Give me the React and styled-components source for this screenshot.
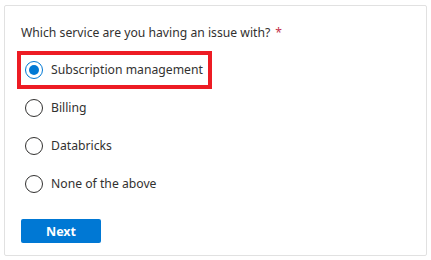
import React, { useState } from "react";
import styled, { createGlobalStyle } from "styled-components";

const GlobalStyle = createGlobalStyle`
  body {
    margin: 0;
    background: #ffffff;
    font-family: "Noto Sans", "Open Sans", sans-serif;
  }
`;

const Card = styled.div`
  box-sizing: border-box;
  margin: 5px 0 0 4px;
  width: 423px;
  height: 251px;
  border: 1px solid #e1e1e1;
  border-radius: 2px;
  padding: 18px 16px 12px 16px;
`;

const Question = styled.div`
  font-size: 12.2px;
  line-height: 18px;
  color: #323130;
  margin-bottom: 9px;
`;

const Required = styled.span`
  color: #c4314b;
  margin-left: 5px;
`;

const Options = styled.div`
  display: flex;
  flex-direction: column;
  align-items: flex-start;
  margin-left: -4px;
`;

const Option = styled.label`
  box-sizing: border-box;
  display: inline-flex;
  align-items: center;
  height: 38px;
  padding: 0 5px 0 4px;
  border: 4px solid ${(p) => (p.$highlight ? "#ed1c24" : "transparent")};
  cursor: pointer;
`;

const Circle = styled.span`
  box-sizing: border-box;
  width: 18px;
  height: 18px;
  border-radius: 50%;
  border: 1px solid ${(p) => (p.$checked ? "#0078d4" : "#323130")};
  display: flex;
  align-items: center;
  justify-content: center;
  margin-right: 8px;
  flex-shrink: 0;
`;

const Dot = styled.span`
  width: 10px;
  height: 10px;
  border-radius: 50%;
  background: #0078d4;
`;

const OptionText = styled.span`
  font-size: 12.2px;
  color: #323130;
  line-height: 18px;
`;

const NextButton = styled.button`
  margin-top: 16px;
  width: 80px;
  height: 24px;
  border: none;
  border-radius: 2px;
  background: #0078d4;
  color: #ffffff;
  font-family: "Noto Sans", "Open Sans", sans-serif;
  font-weight: 700;
  font-size: 12.5px;
  cursor: pointer;
`;

const choices = ["Subscription management", "Billing", "Databricks", "None of the above"];

const App = () => {
  const [selected, setSelected] = useState(0);
  return (
    <>
      <GlobalStyle />
      <Card>
        <Question>
          Which service are you having an issue with?<Required>*</Required>
        </Question>
        <Options>
          {choices.map((choice, index) => (
            <Option key={index} $highlight={index === 0} onClick={() => setSelected(index)}>
              <Circle $checked={selected === index}>{selected === index && <Dot />}</Circle>
              <OptionText>{choice}</OptionText>
            </Option>
          ))}
        </Options>
        <NextButton>Next</NextButton>
      </Card>
    </>
  );
};

export default App;
